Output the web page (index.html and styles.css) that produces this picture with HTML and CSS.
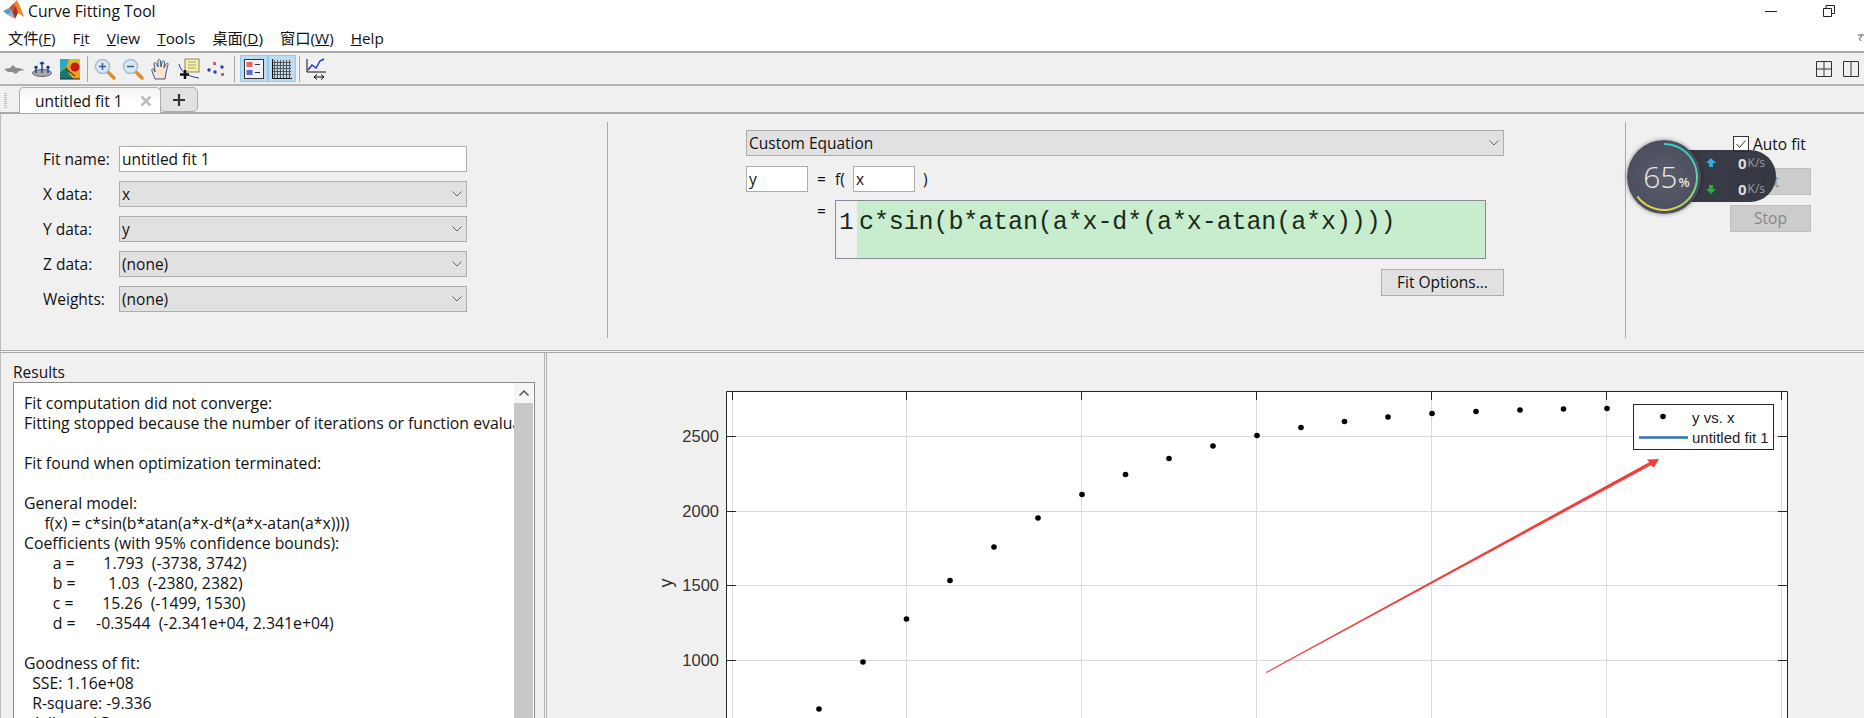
FILE: index.html
```html
<!DOCTYPE html>
<html lang="en">
<head>
<meta charset="utf-8">
<title>Curve Fitting Tool</title>
<link rel="stylesheet" href="styles.css">
</head>
<body>
<header class="title-bar">
  <svg class="logo" viewBox="0 0 24 20" width="24" height="20">
    <polygon points="1,11 7,8 10,11 6,15" fill="#5a9ccb"/>
    <polygon points="7,8 12,3 14,6 10,11" fill="#c9502a"/>
    <polygon points="12,3 15,0 18,6 22,17 16,13" fill="#e98a2c"/>
    <polygon points="10,11 14,6 16,13 13,19" fill="#a8331c"/>
    <polygon points="6,15 10,11 13,19" fill="#3f6f9c" opacity=".55"/>
  </svg>
  <span class="title-text">Curve Fitting Tool</span>
  <div class="win-controls">
    <svg viewBox="0 0 12 12" width="12" height="12"><path d="M0 6.500H12" stroke="#222" fill="none"/></svg>
    <svg viewBox="0 0 12 12" width="12" height="12"><path d="M.5 3.500h8v8h-8zM3 3.500V.5h8.500v8H8.500" stroke="#222" fill="none"/></svg>
  </div>
</header>
<nav class="menu-bar">
  <span class="menu-item">文件(<u>F</u>)</span>
  <span class="menu-item">F<u>i</u>t</span>
  <span class="menu-item"><u>V</u>iew</span>
  <span class="menu-item"><u>T</u>ools</span>
  <span class="menu-item">桌面(<u>D</u>)</span>
  <span class="menu-item">窗口(<u>W</u>)</span>
  <span class="menu-item"><u>H</u>elp</span>
  <svg class="help-mark" viewBox="0 0 6 8" width="6" height="8"><path d="M0 1h6M3 1v3M1 4l2 3" stroke="#555" fill="none"/></svg>
</nav>
<div class="tool-bar">
  <svg class="tb-icon" viewBox="0 0 22 22" width="22" height="22"><path d="M1 11l6-1 3-3 3 3h3l6 2-6 1-3 3-4-2-4 0z" fill="#8b8b8b"/></svg>
  <svg class="tb-icon" viewBox="0 0 22 22" width="22" height="22"><ellipse cx="11" cy="15" rx="9.500" ry="3.500" fill="#a9a9a9" stroke="#666"/><path d="M11 4v11M5 9v6M17 9v6M11 4l-2 2M11 4l2 2M5 8l-1.500 2M5 8l1.500 2M17 8l-1.500 2M17 8l1.500 2" stroke="#1f3f8f" stroke-width="1.500" fill="none"/></svg>
  <svg class="tb-icon" viewBox="0 0 22 22" width="22" height="22"><rect x="1" y="1" width="20" height="20" fill="#f0a020"/><path d="M1 1h9l-3 8-6 4z" fill="#2aa8c8"/><path d="M10 1h11v14l-6-3-4-5z" fill="#d8c020"/><circle cx="16" cy="9" r="4.500" fill="#c81818"/><path d="M1 21v-7l7-5 2 7 5 5z" fill="#157a6a"/><path d="M7 11l9 7" stroke="#111"/><path d="M1 21h20" stroke="#123"/></svg>
  <i class="tb-sep"></i>
  <svg class="tb-icon" viewBox="0 0 22 22" width="22" height="22"><path d="M13 13l7 7" stroke="#d99035" stroke-width="3.500" stroke-linecap="round"/><circle cx="8.500" cy="8.500" r="7" fill="#dbe8f4" stroke="#a6bdd2" stroke-width="1.500"/><path d="M5 8.500h7M8.500 5v7" stroke="#3a5f96" stroke-width="1.500"/></svg>
  <svg class="tb-icon" viewBox="0 0 22 22" width="22" height="22"><path d="M13 13l7 7" stroke="#d99035" stroke-width="3.500" stroke-linecap="round"/><circle cx="8.500" cy="8.500" r="7" fill="#dbe8f4" stroke="#a6bdd2" stroke-width="1.500"/><path d="M5 8.500h7" stroke="#3a5f96" stroke-width="1.500"/></svg>
  <svg class="tb-icon" viewBox="0 0 22 22" width="22" height="22"><path d="M5 21l-3-8c-1-2 1-3 2-1l1 2-1-8c0-2 2-2 2.500 0L8 9 8 3c0-2 2.500-2 2.500 0l.5 6 1-5c.5-2 2.500-1.500 2.500 0L14 10l2-4c1-1.500 2.500-1 2 .5L16 15l-1 6z" fill="#fbe3cf" stroke="#3d5a80"/></svg>
  <svg class="tb-icon" viewBox="0 0 22 22" width="22" height="22"><rect x="7" y="1" width="14" height="13" fill="#f2eeb0" stroke="#8c8a50"/><path d="M10 4h8M10 7h8M10 10h8" stroke="#aaa777"/><path d="M1 6c2 7 6 12 20 14" stroke="#2233cc" fill="none"/><path d="M7 12v9M2 16.500h9" stroke="#111" stroke-width="2.500"/></svg>
  <svg class="tb-icon" viewBox="0 0 22 22" width="22" height="22"><g fill="#2340b0"><circle cx="3" cy="12" r="1.700"/><circle cx="9" cy="14" r="1.700"/><circle cx="16" cy="9" r="1.700"/></g><g fill="#e2526b"><rect x="7" y="4" width="3" height="3"/><rect x="15" y="15" width="3" height="3"/></g></svg>
  <i class="tb-sep"></i>
  <div class="tb-toggle first"><svg viewBox="0 0 20 20" width="20" height="20"><rect x=".5" y=".5" width="19" height="19" fill="#eef2f6" stroke="#333"/><rect x="2.500" y="3" width="6" height="5" fill="#e2666b"/><rect x="2.500" y="11" width="6" height="5" fill="#5a68d8"/><path d="M11 5.500h5M11 13.500h5" stroke="#333"/></svg></div>
  <div class="tb-toggle"><svg viewBox="0 0 20 20" width="20" height="20"><path d="M2.500 1v18M5.500 1v18M8.500 1v18M11.500 1v18M14.500 1v18M17.500 1v18M1 3.500h18M1 6.500h18M1 9.500h18M1 12.500h18M1 15.500h18" stroke="#555" fill="none"/><path d="M.5 0v19.500H20" stroke="#111" fill="none"/></svg></div>
  <i class="tb-sep"></i>
  <svg class="tb-icon" viewBox="0 0 22 22" width="22" height="22"><path d="M1 1v13h19" stroke="#111" fill="none"/><path d="M2 12l4-5 4 3 4-7 4-2" stroke="#2233cc" stroke-width="1.500" fill="none"/><path d="M8 19h10M8 19l3-2.500M8 19l3 2.500M18 19l-3-2.500M18 19l-3 2.500" stroke="#111" fill="none"/></svg>
  <div class="layout-icons">
    <svg viewBox="0 0 16 16" width="16" height="16"><path d="M.5.500h15v15H.5zM8 .5v15M.5 8h15" stroke="#333" fill="none"/></svg>
    <svg viewBox="0 0 16 16" width="16" height="16"><path d="M.5.500h15v15H.5zM8 .5v15" stroke="#333" fill="none"/></svg>
  </div>
</div>
<div class="tab-strip">
  <i class="grip"></i>
  <div class="tab tab-active">
    <span>untitled fit 1</span>
    <svg viewBox="0 0 12 12" width="12" height="12"><path d="M1.500 1.500l9 9M10.500 1.500l-9 9" stroke="#bcbcbc" stroke-width="2.500"/></svg>
  </div>
  <div class="tab tab-add"><svg viewBox="0 0 12 12" width="12" height="12"><path d="M6 0v12M0 6h12" stroke="#333" stroke-width="2.200"/></svg></div>
</div>
<section class="top-panel">
  <div class="data-section">
    <label class="field-label">Fit name:</label><div class="text-input">untitled fit 1</div>
    <label class="field-label">X data:</label><div class="combo"><span>x</span><svg class="chev" viewBox="0 0 10 6" width="10" height="6"><path d="M.5.500L5 5 9.500.5" stroke="#666" fill="none"/></svg></div>
    <label class="field-label">Y data:</label><div class="combo"><span>y</span><svg class="chev" viewBox="0 0 10 6" width="10" height="6"><path d="M.5.500L5 5 9.500.5" stroke="#666" fill="none"/></svg></div>
    <label class="field-label">Z data:</label><div class="combo"><span>(none)</span><svg class="chev" viewBox="0 0 10 6" width="10" height="6"><path d="M.5.500L5 5 9.500.5" stroke="#666" fill="none"/></svg></div>
    <label class="field-label">Weights:</label><div class="combo"><span>(none)</span><svg class="chev" viewBox="0 0 10 6" width="10" height="6"><path d="M.5.500L5 5 9.500.5" stroke="#666" fill="none"/></svg></div>
  </div>
  <div class="eq-section">
    <div class="combo"><span>Custom Equation</span><svg class="chev" viewBox="0 0 10 6" width="10" height="6"><path d="M.5.500L5 5 9.500.5" stroke="#666" fill="none"/></svg></div>
    <div class="eq-vars">
      <div class="text-input small">y</div>
      <span class="eq-sign">=</span>
      <span class="eq-f">f(</span>
      <div class="text-input small">x</div>
      <span class="eq-close">)</span>
    </div>
    <div class="eq-row">
      <span class="eq-sign top">=</span>
      <div class="eq-box">
        <span class="eq-gutter">1</span>
        <span class="eq-code">c*sin(b*atan(a*x-d*(a*x-atan(a*x))))</span>
      </div>
    </div>
    <div class="eq-actions"><div class="btn">Fit Options...</div></div>
  </div>
  <div class="run-section">
    <div class="auto-fit">
      <svg viewBox="0 0 16 16" width="16" height="16"><rect x=".5" y=".5" width="15" height="15" fill="#fff" stroke="#333"/><path d="M3.500 8l3 3.500 6-7" stroke="#333" fill="none"/></svg>
      <span>Auto fit</span>
    </div>
    <div class="btn disabled">Fit</div>
    <div class="btn disabled">Stop</div>
  </div>
</section>
<main class="bottom">
  <section class="results">
    <div class="results-label">Results</div>
    <div class="results-box">
      <pre class="results-text">Fit computation did not converge:
Fitting stopped because the number of iterations or function evaluations

Fit found when optimization terminated:

General model:
     f(x) = c*sin(b*atan(a*x-d*(a*x-atan(a*x))))
Coefficients (with 95% confidence bounds):
       a =       1.793  (-3738, 3742)
       b =        1.03  (-2380, 2382)
       c =       15.26  (-1499, 1530)
       d =     -0.3544  (-2.341e+04, 2.341e+04)

Goodness of fit:
  SSE: 1.16e+08
  R-square: -9.336
  Adjusted R-square:</pre>
      <div class="scrollbar">
        <div class="scroll-up"><svg viewBox="0 0 10 6" width="10" height="6"><path d="M.5 5.500L5 1l4.500 4.500" stroke="#555" stroke-width="1.500" fill="none"/></svg></div>
        <div class="scroll-track"></div>
      </div>
    </div>
  </section>
  <section class="plot-pane">
    <svg class="plot" viewBox="547 353 1317 365" width="1317" height="365">
      <rect x="726" y="391" width="1062" height="340" fill="#fff"/>
      <g class="grid">
        <path d="M906.500 391V731M1081.500 391V731M1256.500 391V731M1431.500 391V731M1606.500 391V731M1781.500 391V731M732.500 391V731"/>
        <path d="M726 436.500H1788M726 511.500H1788M726 585.500H1788M726 660.500H1788"/>
      </g>
      <path class="axis" d="M726.500 731V391.500H1787.500V731"/>
      <path class="axis" d="M732.500 391v9M906.500 391v9M1081.500 391v9M1256.500 391v9M1431.500 391v9M1606.500 391v9M1781.500 391v9M726 436.500h10M726 511.500h10M726 585.500h10M726 660.500h10M1778 436.500h10M1778 511.500h10M1778 585.500h10M1778 660.500h10"/>
      <g class="tick-label">
        <text x="719" y="442">2500</text>
        <text x="719" y="517">2000</text>
        <text x="719" y="591">1500</text>
        <text x="719" y="666">1000</text>
      </g>
      <text class="y-label" transform="translate(672 583) rotate(-90)">y</text>
      <g fill="#000">
        <circle cx="819" cy="709" r="2.800"/><circle cx="863" cy="662" r="2.800"/><circle cx="906.500" cy="619" r="2.800"/><circle cx="950" cy="580.500" r="2.800"/><circle cx="994" cy="547" r="2.800"/><circle cx="1038" cy="518" r="2.800"/><circle cx="1082" cy="494.500" r="2.800"/><circle cx="1125.500" cy="474.500" r="2.800"/><circle cx="1169" cy="458.500" r="2.800"/><circle cx="1213" cy="446" r="2.800"/><circle cx="1257" cy="435.500" r="2.800"/><circle cx="1301" cy="427.500" r="2.800"/><circle cx="1344.500" cy="421.500" r="2.800"/><circle cx="1388" cy="417" r="2.800"/><circle cx="1432" cy="413.500" r="2.800"/><circle cx="1476" cy="411.500" r="2.800"/><circle cx="1520" cy="410" r="2.800"/><circle cx="1563.500" cy="409" r="2.800"/><circle cx="1607" cy="408.500" r="2.800"/>
      </g>
      <rect x="1633.500" y="404.500" width="140" height="45" fill="#fff" stroke="#262626"/>
      <circle cx="1663" cy="416.500" r="2.800" fill="#000"/>
      <path d="M1639 437.500h49" stroke="#2a72b5" stroke-width="2.500"/>
      <text class="legend-text" x="1692" y="423">y vs. x</text>
      <text class="legend-text" x="1692" y="443">untitled fit 1</text>
      <polygon points="1266,672 1266.500,673 1650.800,465.200 1654,467.500 1659,459 1647,459.500 1649.200,462.200" fill="#f33c3c"/>
    </svg>
  </section>
</main>
<aside class="net-widget">
  <div class="net-pill">
    <div class="net-row"><svg viewBox="0 0 10 10" width="10" height="10"><path d="M5 0l5 5H7v4H3V5H0z" fill="#3aa8e0"/></svg><b>0</b><small>K/s</small></div>
    <div class="net-row"><svg viewBox="0 0 10 10" width="10" height="10"><path d="M5 10l5-5H7V1H3v4H0z" fill="#22b03a"/></svg><b>0</b><small>K/s</small></div>
  </div>
  <div class="net-dial">
    <svg viewBox="0 0 74 74" width="74" height="74">
      <defs><linearGradient id="ring" x1="0.500" y1="0" x2="0.200" y2="1"><stop offset="0" stop-color="#35cdbf"/><stop offset=".5" stop-color="#7fd68a"/><stop offset="1" stop-color="#ecd23c"/></linearGradient></defs>
      <path d="M37 4A33 33 0 1 1 10.300 56.400" fill="none" stroke="url(#ring)" stroke-width="2"/>
    </svg>
    <span class="dial-text">65<small>%</small></span>
  </div>
</aside>
</body>
</html>
```
FILE: styles.css
```css
* { box-sizing: border-box; }
html, body { margin: 0; height: 718px; overflow: hidden; }
body {
  position: relative;
  background: #f0f0f0;
  color: #111;
  font: 15.500px/20px "Open Sans", "Noto Sans CJK SC", sans-serif;
}
.title-bar {
  height: 21px;
  background: #fff;
  display: flex;
  align-items: center;
  position: relative;
}
.logo { margin: -2px 0 0 2px; }
.title-text { margin-left: 2px; font-size: 15.700px; }
.win-controls { margin-left: auto; display: flex; gap: 46px; padding-right: 29px; }
.menu-bar {
  height: 32px;
  background: #fff;
  border-bottom: 2px solid #a9a9a9;
  display: flex;
  align-items: center;
  gap: 17px;
  padding: 4px 0 0 8px;
  font-size: 15.300px;
}
.menu-item { white-space: nowrap; }
.help-mark { margin-left: auto; }
.tool-bar {
  height: 33px;
  border-bottom: 2px solid #b4b4b4;
  display: flex;
  align-items: center;
  padding-left: 3px;
  gap: 6px;
}
.tb-icon { flex: none; }
.tb-sep { width: 1px; height: 26px; background: #a8a8a8; }
.tb-toggle {
  width: 28px;
  height: 27px;
  margin-right: -6px;
  background: #bcdcf4;
  border: 1px solid #96c8ee;
  display: flex;
  align-items: center;
  justify-content: center;
}
.tb-toggle.first { margin-left: -1px; }
.tb-toggle + .tb-sep { margin-left: 3px; }
.layout-icons { margin-left: auto; display: flex; gap: 11px; padding-right: 5px; }
.tab-strip {
  height: 28px;
  display: flex;
  align-items: flex-end;
  padding-left: 4px;
  border-bottom: 2px solid #a9a9a9;
}
.grip {
  width: 3px;
  height: 16px;
  margin: 0 12px 3px 0;
  background: repeating-linear-gradient(#bdbdbd 0 1px, transparent 1px 2px);
}
.tab {
  height: 26px;
  border: 1px solid #adadad;
  border-bottom: 0;
  border-radius: 5px 5px 0 0;
  display: flex;
  align-items: center;
  margin-bottom: -1px;
}
.tab-active {
  width: 142px;
  padding: 0 8px 0 15px;
  background: linear-gradient(#f4f4f4, #fff 60%);
  justify-content: space-between;
  z-index: 1;
}
.tab-add {
  width: 38px;
  height: 25px;
  margin-bottom: 0;
  justify-content: center;
  background: #e2e2e2;
  border-radius: 0 5px 5px 5px;
  border-bottom: 1px solid #adadad;
  margin-left: -1px;
}
.top-panel {
  height: 239px;
  display: flex;
  padding: 8px 0 12px;
  border-left: 1px solid #bdbdbd;
  border-bottom: 3px double #a9a9a9;
}
.data-section {
  width: 607px;
  flex: none;
  border-right: 1px solid #a9a9a9;
  padding: 24px 0 0 42px;
  display: grid;
  grid-template-columns: 76px 348px;
  grid-auto-rows: 26px;
  row-gap: 9px;
  align-content: start;
}
.field-label { line-height: 26px; }
.text-input {
  background: #fff;
  border: 1px solid #adadad;
  padding-left: 2px;
  line-height: 24px;
  height: 26px;
}
.text-input.small { width: 62px; }
.combo {
  background: #e1e1e1;
  border: 1px solid #adadad;
  height: 26px;
  display: flex;
  align-items: center;
  justify-content: space-between;
  padding: 0 4px 0 2px;
}
.eq-section {
  width: 1018px;
  flex: none;
  border-right: 1px solid #a9a9a9;
  padding: 8px 121px 0 138px;
}
.eq-vars {
  display: flex;
  align-items: center;
  margin-top: 10px;
  height: 26px;
}
.eq-sign { margin-left: 9px; width: 18px; }
.eq-f { width: 18px; }
.eq-close { margin-left: 8px; }
.eq-row {
  display: flex;
  margin-top: 8px;
  height: 59px;
  padding-left: 71px;
}
.eq-sign.top { margin-left: 0; line-height: 22px; }
.eq-box {
  width: 651px;
  height: 59px;
  border: 1px solid #8a8a96;
  display: flex;
  background: #c8ecce;
  font: 25px/44px "Liberation Mono", monospace;
  color: #1a2a1a;
}
.eq-gutter {
  width: 21px;
  flex: none;
  background: #f0f0f0;
  text-align: center;
  color: #222;
  font-size: 24px;
}
.eq-code { white-space: pre; letter-spacing: -.1px; padding-left: 2px; }
.eq-actions { display: flex; justify-content: flex-end; margin-top: 10px; }
.btn {
  height: 27px;
  background: #e1e1e1;
  border: 1px solid #adadad;
  text-align: center;
  line-height: 25px;
  width: 123px;
}
.run-section { padding: 14px 0 0 104px; }
.auto-fit {
  display: flex;
  align-items: center;
  gap: 4px;
  margin-left: 3px;
  height: 16px;
}
.btn.disabled {
  width: 81px;
  background: #ccc;
  border-color: #bfbfbf;
  color: #888;
}
.auto-fit + .btn { margin-top: 16px; }
.btn.disabled + .btn.disabled { margin-top: 10px; }
.bottom { display: flex; height: 365px; overflow: hidden; }
.results {
  width: 547px;
  flex: none;
  height: 365px;
  padding-left: 13px;
  border-left: 1px solid #bdbdbd;
  border-right: 3px double #b4b4b4;
  overflow: hidden;
}
.results-label { height: 29px; line-height: 38px; margin-left: -1px; }
.results-box {
  width: 522px;
  height: 336px;
  margin-left: -1px;
  background: #fff;
  border: 1px solid #8a8a8a;
  border-bottom: 0;
  display: flex;
}
.results-text {
  margin: 0;
  flex: 1;
  min-width: 0;
  overflow: hidden;
  padding: 10px 0 0 10px;
  font: 15.800px/20px "Open Sans", sans-serif;
  white-space: pre;
}
.scrollbar {
  width: 19px;
  flex: none;
  margin-right: 1px;
  display: flex;
  flex-direction: column;
}
.scroll-up {
  height: 20px;
  background: #f5f5f5;
  display: flex;
  align-items: center;
  justify-content: center;
}
.scroll-track { flex: 1; background: #c8c8c8; }
.plot-pane { flex: 1; min-width: 0; }
.plot { display: block; }
.grid path { stroke: #dcdcdc; fill: none; }
.axis { stroke: #262626; fill: none; }
.tick-label text {
  font: 16.500px "Liberation Sans", sans-serif;
  fill: #333;
  text-anchor: end;
}
.y-label { font: 18px "Liberation Sans", sans-serif; fill: #333; text-anchor: middle; }
.legend-text { font: 15px "Liberation Sans", sans-serif; fill: #222; }
.net-widget {
  position: absolute;
  left: 1627px;
  top: 140px;
  width: 150px;
  height: 74px;
}
.net-pill {
  position: absolute;
  left: 30px;
  right: 1px;
  top: 10px;
  height: 52px;
  border-radius: 26px;
  background: rgba(42, 45, 56, .93);
  padding-left: 49px;
  font-family: "Open Sans", sans-serif;
  color: #dcdcdc;
}
.net-row {
  display: flex;
  align-items: center;
  height: 26px;
}
.net-row svg { margin-right: 22px; }
.net-row b { font-size: 15px; }
.net-row small { font-size: 12px; color: #9a9ca4; margin-left: 1px; }
.net-dial {
  position: absolute;
  left: 0;
  top: 0;
  width: 74px;
  height: 74px;
  border-radius: 50%;
  background: radial-gradient(circle, #5a5d6b 0, #4b4e5c 70%, #3e414d 100%);
  box-shadow: 0 0 4px rgba(0, 0, 0, .45);
}
.net-dial svg { position: absolute; inset: 0; }
.dial-text {
  position: absolute;
  inset: 0;
  display: flex;
  align-items: center;
  justify-content: center;
  color: #e8e8e8;
  font: 300 30px/1 "Open Sans", sans-serif;
  padding-left: 5px;
}
.dial-text small { font-size: 13px; margin: 11px 0 0 1px; font-weight: 600; }
```
